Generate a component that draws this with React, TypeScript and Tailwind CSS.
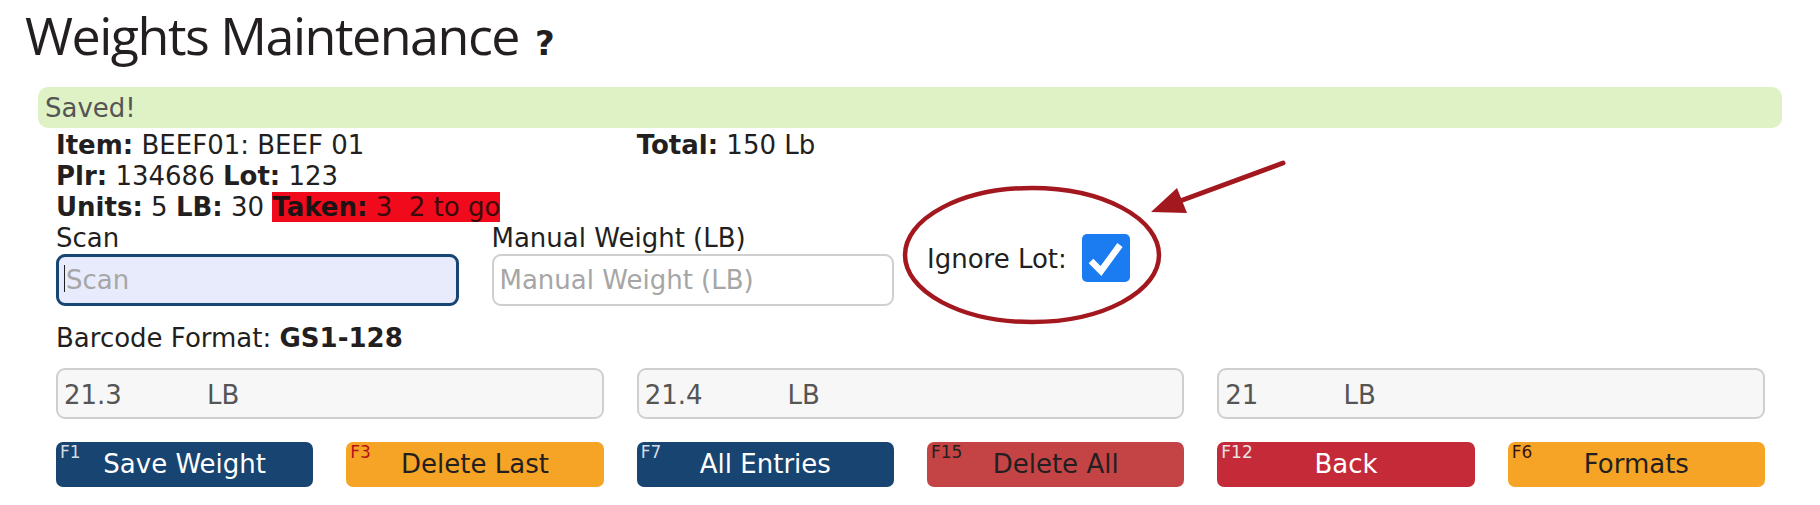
import React from "react";

const keys = [
  { fkey: "F1", label: "Save Weight", btn: "bg-[#174470] text-white", key: "text-[#d6dce6]" },
  { fkey: "F3", label: "Delete Last", btn: "bg-[#f6a425] text-[#231f20]", key: "text-[#b3141c]" },
  { fkey: "F7", label: "All Entries", btn: "bg-[#174470] text-white", key: "text-[#d6dce6]" },
  { fkey: "F15", label: "Delete All", btn: "bg-[#c44446] text-[#231f20]", key: "text-[#231f20]" },
  { fkey: "F12", label: "Back", btn: "bg-[#c52a38] text-white", key: "text-[#e4e4e4]" },
  { fkey: "F6", label: "Formats", btn: "bg-[#f6a425] text-[#231f20]", key: "text-[#3a1414]" },
];

const weights = ["21.3", "21.4", "21"];

const App = () => {
  return (
    <div className="relative w-[1820px] h-[505px] bg-white overflow-hidden font-['DejaVu_Sans',sans-serif] text-[26px] text-[#231f20]">
      {/* Title */}
      <h1 className="mt-[4px] h-[62px] pl-[25px] font-['Open_Sans',sans-serif] text-[52px] leading-[62px] tracking-[-1.5px] text-[#231f20]">
        Weights Maintenance
        <span className="ml-[16px] font-['DejaVu_Sans',sans-serif] font-bold text-[34px] leading-none tracking-normal">?</span>
      </h1>

      {/* Alert */}
      <div className="mt-[21px] mx-[38px] h-[41px] pt-[2px] pl-[7px] leading-[39px] rounded-[10px] bg-[#dff2c6] text-[#555]">
        Saved!
      </div>

      <div className="mx-[56px] w-[1709px]">
        {/* Item details */}
        <div className="mt-[2px] grid grid-cols-3 gap-x-[33px] leading-[31px]">
          <div>
            <b>Item:</b> BEEF01: BEEF 01
          </div>
          <div>
            <b>Total:</b> 150 Lb
          </div>
          <div />
          <div className="col-span-3">
            <b>Plr:</b> 134686 <b>Lot:</b> 123
          </div>
          <div className="col-span-3">
            <b>Units:</b> 5 <b>LB:</b> 30{" "}
            <span className="bg-[#f00a1c] text-[#3d0a0a]">
              <b className="text-[#1c1414]">Taken:</b> 3{"\u00a0"} 2 to go
            </span>
          </div>
        </div>

        {/* Scan row */}
        <div className="grid grid-cols-4 gap-x-[33px]">
          <div>
            <div className="leading-[31px]">Scan</div>
            <div className="relative">
              <input
                className="w-full h-[52px] px-[7px] rounded-[9px] border-[3px] border-[#164671] bg-[#e8ebfb] outline-none placeholder:text-[#a6a6a6]"
                placeholder="Scan"
              />
              <span className="absolute left-[8px] top-[11px] w-[1px] h-[27px] bg-[#231f20]" />
            </div>
          </div>
          <div>
            <div className="leading-[31px]">Manual Weight (LB)</div>
            <input
              className="w-full h-[52px] px-[6px] rounded-[9px] border-2 border-[#cfcfcf] bg-white outline-none placeholder:text-[#a6a6a6]"
              placeholder="Manual Weight (LB)"
            />
          </div>
          <div className="pt-[11px] flex items-center gap-[15px] h-fit">
            <span className="mt-[2px]">Ignore Lot:</span>
            <span className="w-[48px] h-[48px] rounded-[5px] bg-[#1b7cf2] flex items-center justify-center">
              <svg width="48" height="48" viewBox="0 0 48 48">
                <polyline
                  points="9,27 19,37 38,11"
                  fill="none"
                  stroke="white"
                  strokeWidth="6.5"
                  strokeLinejoin="miter"
                />
              </svg>
            </span>
          </div>
        </div>

        {/* Barcode format */}
        <div className="mt-[17px] leading-[31px]">
          Barcode Format: <b>GS1-128</b>
        </div>

        {/* Weights */}
        <div className="mt-[14px] grid grid-cols-3 gap-x-[33px]">
          {weights.map((w) => (
            <div
              key={w}
              className="h-[51px] pt-[4px] px-[6px] flex items-center rounded-[9px] border-2 border-[#cfcfcf] bg-[#f8f7f7] text-[#555]"
            >
              <span>{w}</span>
              <span className="ml-[85px]">LB</span>
            </div>
          ))}
        </div>

        {/* Function keys */}
        <div className="mt-[23px] grid grid-cols-6 gap-x-[33px]">
          {keys.map((k) => (
            <button
              key={k.fkey}
              className={`relative h-[45px] rounded-[7px] text-center leading-[45px] ${k.btn}`}
            >
              <span className={`absolute left-[4px] top-[1px] text-[17px] leading-[18px] ${k.key}`}>
                {k.fkey}
              </span>
              {k.label}
            </button>
          ))}
        </div>
      </div>

      {/* Annotation */}
      <svg className="absolute inset-0 pointer-events-none" width="1820" height="505">
        <ellipse cx="1032" cy="255" rx="127" ry="67" fill="none" stroke="#a3181f" strokeWidth="4.5" />
        <line x1="1283" y1="163" x2="1180" y2="201" stroke="#a3181f" strokeWidth="5" strokeLinecap="round" />
        <polygon points="1151,212 1177,188 1187,213" fill="#a3181f" />
      </svg>
    </div>
  );
};

export default App;
